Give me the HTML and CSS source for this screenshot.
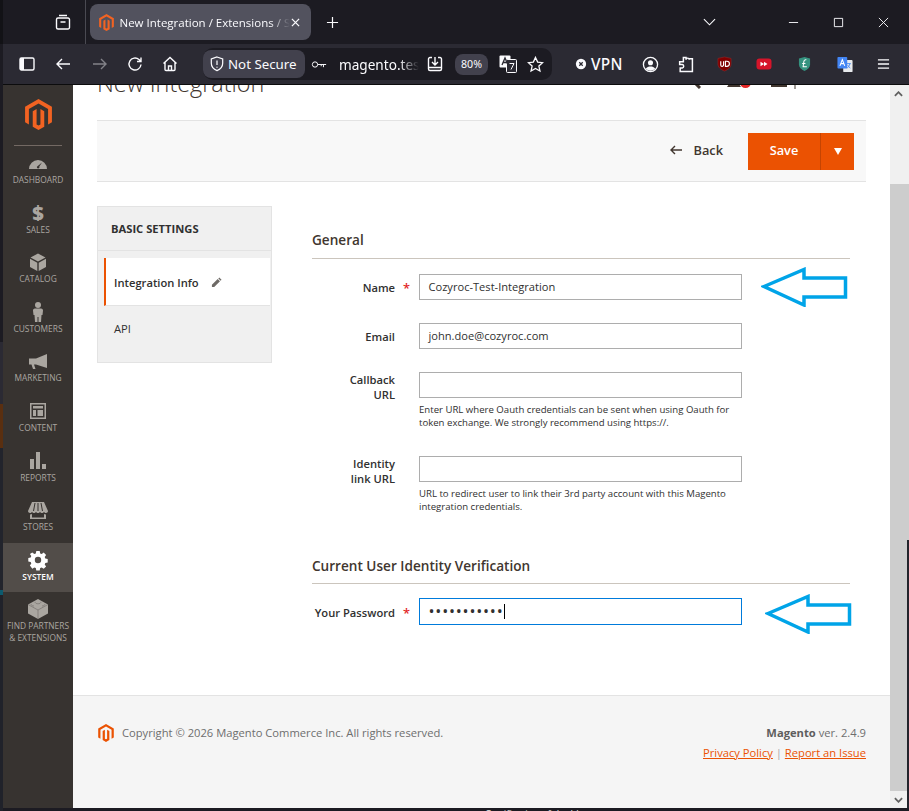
FILE: index.html
```html
<!DOCTYPE html>
<html lang="en">
<head>
<meta charset="utf-8">
<title>New Integration / Extensions / System</title>
<link rel="stylesheet" href="styles.css">
</head>
<body>
<div class="edge"></div>
<div class="window">
  <div class="tabbar">
    <div class="tabbar-left">
      <svg class="ico tabs-ico" viewBox="0 0 18 18"><path d="M5 2.5h8M2.5 6.5a1.5 1.5 0 0 1 1.5-1.5h10a1.5 1.5 0 0 1 1.5 1.5v8a1.5 1.5 0 0 1-1.5 1.5h-10a1.5 1.5 0 0 1-1.5-1.5zM6.5 9h5"/></svg>
    </div>
    <div class="tab">
      <svg class="favicon" viewBox="1.6 0 20.8 24"><path d="M12 0l10.39 6v12l-2.97 1.71V7.71L12 3.43 4.57 7.71v12L1.61 18V6zM12 24l-4.45-2.57v-12l2.97-1.72v12L12 20.43l1.49-.72v-12l2.97 1.72v12z"/></svg>
      <span class="tab-title">New Integration / Extensions / System</span>
      <svg class="ico tab-close" viewBox="0 0 10 10"><path d="M1 1l8 8M9 1l-8 8"/></svg>
    </div>
    <svg class="ico newtab" viewBox="0 0 14 14"><path d="M7 1v12M1 7h12"/></svg>
    <div class="spacer"></div>
    <svg class="ico chevron" viewBox="0 0 14 8"><path d="M1 1l6 6 6-6"/></svg>
    <div class="winctl">
      <svg class="ico" viewBox="0 0 12 12"><path d="M1 6h10"/></svg>
      <svg class="ico" viewBox="0 0 12 12"><path d="M1.5 1.5h9v9h-9z"/></svg>
      <svg class="ico" viewBox="0 0 12 12"><path d="M1 1l10 10M11 1L1 11"/></svg>
    </div>
  </div>

  <div class="toolbar">
    <svg class="ico tb t-side" viewBox="0 0 16 14"><path class="fillw" d="M1 2.5a1.5 1.5 0 0 1 1.5-1.5H5v12H2.5A1.5 1.5 0 0 1 1 11.500z"/><path d="M1 2.500a1.500 1.500 0 0 1 1.500-1.500h11a1.500 1.500 0 0 1 1.500 1.500v9a1.500 1.500 0 0 1-1.500 1.500h-11a1.500 1.500 0 0 1-1.500-1.500z"/></svg>
    <svg class="ico tb t-back" viewBox="0 0 16 14"><path d="M15 7H2M7 2L2 7l5 5"/></svg>
    <svg class="ico tb t-fwd" viewBox="0 0 16 14"><path d="M1 7h13M9 2l5 5-5 5"/></svg>
    <svg class="ico tb t-reload" viewBox="0 0 16 16"><path d="M14 8.500A6 6 0 1 1 12 3.500L14 5.500M14 1.500v4h-4"/></svg>
    <svg class="ico tb t-home" viewBox="0 0 16 16"><path d="M1.500 7.500L8 1.500l6.500 6M3 6.500v7a1 1 0 0 0 1 1h8a1 1 0 0 0 1-1v-7M6.500 14.500v-4.500h3v4.500"/></svg>
    <div class="urlbar">
      <div class="secure">
        <svg class="ico shield" viewBox="0 0 16 18"><path d="M8 1l6.500 2.200v5c0 4-2.800 6.800-6.500 8.300-3.700-1.500-6.500-4.300-6.500-8.300v-5z"/><path d="M8 5v5M8 12v1.400"/></svg>
        <span>Not Secure</span>
      </div>
      <svg class="ico key" viewBox="0 0 18 10"><circle cx="4.500" cy="5" r="3"/><path d="M7.500 5H17M14 5v3M11.500 5v2"/></svg>
      <span class="url">magento.test</span>
      <svg class="ico u-dl" viewBox="0 0 16 16"><path d="M5 1.500H3A1.500 1.500 0 0 0 1.500 3v10A1.500 1.500 0 0 0 3 14.500h10a1.500 1.500 0 0 0 1.500-1.500V3A1.500 1.500 0 0 0 13 1.500h-2M8 1v7.500M5 6l3 3 3-3M1.500 11.500h13"/></svg>
      <span class="zoomlevel">80%</span>
      <svg class="u-tr" viewBox="0 0 18 18"><rect x="0.500" y="0.500" width="11" height="12" rx="1" fill="#fbfbfe"/><rect x="7.500" y="4.500" width="10" height="13" rx="1" fill="#2b2a33" stroke="#fbfbfe"/><path d="M3 10l3-7 3 7M4.200 7.500h3.600" fill="none" stroke="#2b2a33" stroke-width="1.300"/><path d="M10.500 8.500h4.500l-3 6" fill="none" stroke="#fbfbfe"/></svg>
      <svg class="ico u-star" viewBox="0 0 18 18"><path d="M9 1.500l2.300 5 5.200.6-3.900 3.500 1.100 5.300L9 13.200l-4.700 2.700 1.100-5.300L1.500 7.100l5.200-.6z"/></svg>
    </div>
    <div class="vpn">
      <svg viewBox="0 0 14 14"><circle cx="7" cy="7" r="6" fill="#fbfbfe"/><path d="M5 5l4 4M9 5l-4 4" stroke="#2b2a33" stroke-width="1.500"/></svg>
      <span>VPN</span>
    </div>
    <svg class="ico ext e-acct" viewBox="0 0 18 18"><circle cx="9" cy="9" r="7.500"/><circle class="fillw" cx="9" cy="7.200" r="2.700"/><path class="fillw" d="M4 13.500c1-2 3-2.500 5-2.500s4 .5 5 2.500c-1 1.200-3 2-5 2s-4-.8-5-2z"/></svg>
    <svg class="ico ext e-puzzle" viewBox="0 0 16 16"><path d="M6 1.500h2.500v2a1.500 1.500 0 0 1 3 0v-1h3v12H3v-3.200h2a1.700 1.700 0 0 0 0-3.300H2.500V5.500H6z"/></svg>
    <svg class="ext e-ub" viewBox="0 0 16 16"><path d="M8 .5l7 1.500v6c0 3.500-3 6-7 7.500-4-1.500-7-4-7-7.500V2z" fill="#800000" stroke="#a52a2a" stroke-width=".5"/><path d="M4 5v4a1.500 1.500 0 0 0 3 0V5M9 5v5.500h1.500a2.700 2.700 0 0 0 0-5.500z" fill="none" stroke="#fff" stroke-width="1.200"/></svg>
    <svg class="ext e-ff" viewBox="0 0 16 12"><rect x="0.500" y="0.500" width="15" height="11" rx="3" fill="#d6142a"/><path d="M4.500 3.800L8 6 4.500 8.200zM8 3.800L11.500 6 8 8.200z" fill="#fff"/></svg>
    <svg class="ext e-ld" viewBox="0 0 14 16"><path d="M7 .5l6 1.500v6.500c0 3-2.500 5.500-6 7-3.500-1.500-6-4-6-7V2z" fill="#35927f"/><path d="M9 3.500c-1.500-.5-2.500.5-2.700 2L5.500 11h4M4.500 7.500h3.500" fill="none" stroke="#fff" stroke-width="1.100"/></svg>
    <svg class="ext e-gt" viewBox="0 0 18 18"><rect x="7" y="4" width="10.500" height="13.500" rx="1" fill="#e8eaed"/><rect x="0.500" y="0.500" width="11" height="13" rx="1" fill="#4285f4"/><path d="M3.300 10.500l2.700-7 2.700 7M4.300 8h3.400" fill="none" stroke="#fff" stroke-width="1.200"/><path d="M11 8h4.500M14.500 8c-.5 3-2 4.500-3.500 5M12 9.500c.5 1.500 1.500 2.500 3 3.500" fill="none" stroke="#4285f4"/></svg>
    <svg class="ico ext e-menu" viewBox="0 0 14 12"><path d="M1 1.500h12M1 6h12M1 10.500h12"/></svg>
  </div>
  <div class="chrome-line"></div>

  <div class="viewport">
    <nav class="menu">
      <div class="menu-logo">
        <svg viewBox="1.6 0 20.8 24"><path d="M12 0l10.390 6v12l-2.970 1.710V7.710L12 3.430 4.570 7.710v12L1.610 18V6zM12 24l-4.450-2.570v-12l2.970-1.720v12L12 20.430l1.490-.72v-12l2.970 1.720v12z"/></svg>
      </div>
      <a class="menu-item"><span class="menu-icon"><svg class="i-dash" viewBox="0 0 18 12"><path d="M0 12A9 9 0 0 1 18 12zM2.600 9.500v-.6M15.400 9.500v-.6M9 4.500v1M5 5.700l.6.700M13 5.400l-2.700 4.100a1.300 1.300 0 1 1-1.500-.6z" fill-rule="evenodd"/></svg></span><span class="menu-label">Dashboard</span></a>
      <a class="menu-item"><span class="menu-icon menu-dollar">$</span><span class="menu-label">Sales</span></a>
      <a class="menu-item"><span class="menu-icon"><svg class="i-cat" viewBox="0 0 16 18"><path d="M8 .5l7.500 4L8 8.500.5 4.500zM0 5.800l7.300 3.900V18L0 14zM16 5.800l-7.300 3.900V18l7.300-4z"/></svg></span><span class="menu-label">Catalog</span></a>
      <a class="menu-item"><span class="menu-icon"><svg class="i-cust" viewBox="0 0 10 20"><circle cx="5" cy="3" r="3"/><path d="M2 6.500h6c1.500 0 2 1 2 2l-.5 4.500H8.500L8 20H5.500v-5h-1v5H2l-.5-7H.5L0 8.500c0-1 .5-2 2-2z"/></svg></span><span class="menu-label">Customers</span></a>
      <a class="menu-item"><span class="menu-icon"><svg class="i-mkt" viewBox="0 0 18 15"><path d="M18 0v14L7 10.500H5l1.500 4.500H4L2.500 10.500H0v-6h7z"/></svg></span><span class="menu-label">Marketing</span></a>
      <a class="menu-item"><span class="menu-icon"><svg class="i-cont" viewBox="0 0 16 16"><path fill-rule="evenodd" d="M0 0h16v16H0zM1.500 1.500v13h13v-13zM3 3h10v2.500H3zM3 7h3v6H3zM7.500 7H13v6H7.500z"/></svg></span><span class="menu-label">Content</span></a>
      <a class="menu-item"><span class="menu-icon"><svg class="i-rep" viewBox="0 0 16 17"><path d="M0 7h4v10H0zM6 0h4v17H6zM12 12h4v5h-4z"/></svg></span><span class="menu-label">Reports</span></a>
      <a class="menu-item"><span class="menu-icon"><svg class="i-sto" viewBox="0 0 20 17"><path d="M4 0h12l4 9c0 1.300-1 2-2 2s-1.500-.5-2-1c-.5.500-1 1-2 1s-1.500-.5-2-1c-.5.500-1 1-2 1s-1.500-.5-2-1c-.5.500-1 1-2 1s-1.500-.5-2-1c-.5.500-1 1-2 1s-2-.7-2-2zM2 12.500c1 0 1.500-.2 2-.5v3.500h12V12c.5.300 1 .5 2 .5V17H2z"/><path class="cut" d="M7 1L5.500 9M10 1v8M13 1l1.500 8"/></svg></span><span class="menu-label">Stores</span></a>
      <a class="menu-item is-active"><span class="menu-icon"><svg class="i-sys" viewBox="0 0 18 18"><path fill-rule="evenodd" d="M7.300 0h3.400l.5 2.400 1.500.6 2-1.400 2.400 2.400-1.400 2 .6 1.500 2.400.5v3.400l-2.400.5-.6 1.500 1.400 2-2.400 2.400-2-1.400-1.500.6-.5 2.400H7.300l-.5-2.400-1.500-.6-2 1.400L.9 14.400l1.400-2-.6-1.500L-.7 10.400V7l2.400-.5.6-1.500-1.400-2L3.300 1.600l2 1.400 1.500-.6zM9 5.800a3.200 3.200 0 1 0 0 6.400 3.200 3.200 0 0 0 0-6.400z"/></svg></span><span class="menu-label">System</span></a>
      <a class="menu-item"><span class="menu-icon"><svg class="i-lego" viewBox="0 0 20 20"><path d="M10 0l10 5.500v9L10 20 0 14.500v-9z"/><path class="cut2" d="M0 5.500L10 11l10-5.500M10 11v9M7 2.800c0 1.200 1.300 2 3 2s3-.8 3-2M3 5c0 1.200 1.300 2 3 2M14 7c1.700 0 3-.8 3-2"/></svg></span><span class="menu-label">Find Partners &amp; Extensions</span></a>
    </nav>

    <div class="page">
      <div class="titlebar">
        <h1 class="page-title">New Integration</h1>
        <div class="header-tools">
          <svg class="h-search" viewBox="0 0 16 16"><circle cx="6" cy="6" r="5" fill="none" stroke="#41362f" stroke-width="2"/><path d="M10 10l5 5" stroke="#41362f" stroke-width="3"/></svg>
          <span class="h-bell"><svg viewBox="0 0 16 16"><path d="M8 0c3 0 5 2 5 6v3l2 3H1l2-3V6c0-4 2-6 5-6z" fill="#41362f"/></svg><i class="h-badge"></i></span>
          <svg class="h-user" viewBox="0 0 30 16"><path d="M4 0h16v9H4z" fill="#41362f"/><path d="M28 6v5" stroke="#41362f"/></svg>
        </div>
      </div>

      <div class="actions">
        <a class="back"><svg viewBox="0 0 12 10"><path d="M12 5H1.500M5 1L1 5l4 4"/></svg><span>Back</span></a>
        <div class="save-split">
          <span class="save">Save</span>
          <span class="save-toggle"><i class="caret-down"></i></span>
        </div>
      </div>

      <div class="main">
        <aside class="side">
          <div class="side-title">Basic Settings</div>
          <div class="side-links">
            <div class="side-item is-current"><span>Integration Info</span>
              <svg viewBox="0 0 12 12"><path d="M9 .5l2.500 2.500-1 1L8 1.500zM7.300 2.200l2.500 2.500L3.500 11H1v-2.500z"/></svg>
            </div>
            <div class="side-item side-item-plain">API</div>
          </div>
        </aside>

        <form class="form">
          <h2 class="section section-first">General</h2>
          <div class="field">
            <div class="label">Name</div><div class="req">*</div>
            <div class="control"><div class="input">Cozyroc-Test-Integration</div></div>
          </div>
          <div class="field">
            <div class="label">Email</div><div class="req"></div>
            <div class="control"><div class="input">john.doe@cozyroc.com</div></div>
          </div>
          <div class="field field-note">
            <div class="label label-two">Callback<br>URL</div><div class="req"></div>
            <div class="control"><div class="input"></div>
              <div class="note">Enter URL where Oauth credentials can be sent when using Oauth for token exchange. We strongly recommend using https://.</div></div>
          </div>
          <div class="field field-note">
            <div class="label label-two">Identity<br>link URL</div><div class="req"></div>
            <div class="control"><div class="input"></div>
              <div class="note">URL to redirect user to link their 3rd party account with this Magento integration credentials.</div></div>
          </div>
          <h2 class="section section-second">Current User Identity Verification</h2>
          <div class="field">
            <div class="label label-pw">Your Password</div><div class="req req-pw">*</div>
            <div class="control"><div class="input input-focus"><span class="dots">•••••••••••</span><i class="cursor"></i></div></div>
          </div>
          <svg class="arrow arrow-1" viewBox="0 0 88 40"><path d="M3 19.500L43 2.500v8.500h41.500v19H43v8z"/></svg>
          <svg class="arrow arrow-2" viewBox="0 0 88 40"><path d="M3 19.500L43 2.500v8.500h41.500v19H43v8z"/></svg>
        </form>
      </div>

      <footer class="footer">
        <div class="foot-left">
          <svg viewBox="1.6 0 20.8 24"><path d="M12 0l10.390 6v12l-2.970 1.710V7.710L12 3.430 4.570 7.710v12L1.610 18V6zM12 24l-4.450-2.570v-12l2.970-1.720v12L12 20.430l1.490-.72v-12l2.970 1.720v12z"/></svg>
          <span class="copy">Copyright © 2026 Magento Commerce Inc. All rights reserved.</span>
        </div>
        <div class="foot-right">
          <div><b>Magento</b> ver. 2.4.9</div>
          <div class="foot-links"><a>Privacy Policy</a> <span class="pipe">|</span> <a>Report an Issue</a></div>
        </div>
      </footer>
    </div>

    <div class="scrollbar">
      <div class="sb-btn"><svg viewBox="0 0 10 6"><path d="M1 5l4-4 4 4"/></svg></div>
      <div class="sb-gap"></div>
      <div class="sb-thumb"></div>
      <div class="sb-btn sb-btn-down"><svg viewBox="0 0 10 6"><path d="M1 1l4 4 4-4"/></svg></div>
    </div>
    <div class="right-edge"></div>
  </div>
  <div class="under"><span>Certification of the blog</span></div>
</div>
</body>
</html>
```

FILE: styles.css
```css
* { box-sizing: border-box; }
html, body { margin: 0; padding: 0; height: 100%; }
body {
  display: flex;
  width: 909px;
  height: 811px;
  overflow: hidden;
  background: #1c1b22;
  font-family: "Open Sans", "Noto Sans", sans-serif;
}
.edge {
  width: 3px;
  flex: none;
  background: linear-gradient(#121216 0 44px, #1c1b22 44px 342px, #2b2a33 342px 404px, #5a2f10 404px 448px, #22242c 448px 590px, #0c5a6e 590px 595px, #20222a 595px 811px);
}
.window { flex: 1; min-width: 0; display: flex; flex-direction: column; }

.ico { fill: none; stroke: #fbfbfe; stroke-width: 1.4; flex: none; display: block; }
.fillw { fill: #fbfbfe; stroke: none; }

/* tab strip */
.tabbar { height: 44px; flex: none; background: #1c1b22; display: flex; align-items: center; color: #fbfbfe; }
.tabbar-left { width: 83px; height: 44px; border-right: 1px solid #4a4a52; display: flex; align-items: center; justify-content: flex-end; padding-right: 13px; flex: none; }
.tabs-ico { width: 18px; height: 18px; }
.tab { margin-left: 4px; width: 221px; height: 36px; background: #52525e; border-radius: 8px; display: flex; align-items: center; padding: 0 9px; flex: none; }
.favicon { width: 15px; height: 17px; fill: #f26322; flex: none; }
.tab-title { margin-left: 5.500px; width: 170px; font-size: 11.500px; white-space: nowrap; overflow: hidden; -webkit-mask-image: linear-gradient(90deg, #000 150px, transparent 170px); mask-image: linear-gradient(90deg, #000 150px, transparent 170px); }
.tab-close { width: 9px; height: 9px; margin-left: 1px; }
.newtab { width: 13px; height: 13px; margin-left: 15px; stroke-width: 1.3; }
.spacer { flex: 1; }
.chevron { width: 13px; height: 8px; margin-right: 72px; stroke-width: 1.2; }
.winctl { display: flex; align-items: center; gap: 34px; padding-right: 20px; }
.winctl .ico { width: 11px; height: 11px; stroke-width: 1; }

/* toolbar */
.toolbar { height: 40px; flex: none; background: #2b2a33; display: flex; align-items: center; color: #fbfbfe; }
.chrome-line { height: 1px; flex: none; background: #0c0c0d; }
.tb { width: 16px; height: 16px; }
.t-side { margin-left: 16px; }
.t-back { margin-left: 20px; }
.t-fwd { margin-left: 21px; opacity: .42; }
.t-reload { margin-left: 19px; }
.t-home { margin-left: 19px; }
.urlbar { margin-left: 25px; width: 349px; height: 32px; background: #1c1b22; border-radius: 10px; display: flex; align-items: center; flex: none; }
.secure { width: 102px; height: 28px; margin-left: 0; background: #42414d; border-radius: 8px; display: flex; align-items: center; padding-left: 7px; font-family: "Noto Sans", sans-serif; font-size: 13.300px; flex: none; }
.shield { width: 14px; height: 16px; margin-right: 4px; }
.key { width: 16px; height: 9px; margin-left: 6px; stroke-width: 1.1; }
.url { margin-left: 12px; width: 80px; font-family: "Noto Sans", sans-serif; font-size: 13.600px; white-space: nowrap; overflow: hidden; flex: none; -webkit-mask-image: linear-gradient(90deg, #000 60px, transparent 80px); mask-image: linear-gradient(90deg, #000 60px, transparent 80px); }
.u-dl { width: 16px; height: 16px; margin-left: 8px; }
.zoomlevel { margin-left: 12px; width: 33px; height: 21px; background: #42414d; border-radius: 8px; font-family: "Noto Sans", sans-serif; font-size: 10.600px; display: flex; align-items: center; justify-content: center; flex: none; }
.u-tr { width: 18px; height: 18px; margin-left: 11px; flex: none; }
.u-star { width: 17px; height: 17px; margin-left: 10px; }
.vpn { margin-left: 23px; display: flex; align-items: center; font-family: "Noto Sans", sans-serif; font-size: 15.400px; font-weight: 500; flex: none; letter-spacing: .3px; }
.vpn svg { width: 12px; height: 12px; margin-right: 4px; }
.ext { flex: none; width: 17px; height: 17px; display: block; }
.e-acct { margin-left: 19px; }
.e-puzzle { margin-left: 18px; }
.e-ub { margin-left: 23px; width: 15px; height: 16px; }
.e-ff { margin-left: 24px; width: 16px; height: 12px; }
.e-ld { margin-left: 26px; width: 13px; height: 16px; }
.e-gt { margin-left: 26px; width: 16px; height: 17px; }
.e-menu { margin-left: 24px; width: 13px; height: 12px; }

/* viewport */
.viewport { flex: 1; min-height: 0; display: flex; background: #fff; }
.menu { width: 70px; flex: none; background: #373330; display: flex; flex-direction: column; }
.menu-logo { height: 61px; margin: 0 11px; border-bottom: 1px solid #736963; display: flex; justify-content: center; padding-top: 14px; }
.menu-logo svg { width: 27px; height: 31px; fill: #f26322; }
.menu-item { height: 49.600px; flex: none; padding-top: 7px; display: flex; flex-direction: column; align-items: center; color: #aaa6a0; }
.menu-icon { height: 21px; display: flex; align-items: center; justify-content: center; flex: none; padding-bottom: 1px; }
.menu-icon svg { fill: currentColor; display: block; flex: none; }
.menu-dollar { font-size: 20px; font-weight: 800; line-height: 18px; height: 20px; margin-bottom: 1px; padding-bottom: 0; }
.menu-label { font-size: 8.400px; line-height: 11.200px; text-transform: uppercase; text-align: center; }
.menu-item.is-active { background: #524d49; color: #fff; }
.menu-item.is-active .menu-label { font-weight: 600; }
.i-dash { width: 18px; height: 12px; }
.i-cat { width: 16px; height: 18px; }
.i-cust { width: 10px; height: 20px; }
.i-mkt { width: 18px; height: 15px; }
.i-cont { width: 16px; height: 16px; }
.i-rep { width: 16px; height: 17px; }
.i-sto { width: 20px; height: 17px; }
.i-sys { width: 18px; height: 18px; overflow: visible; }
.i-lego { width: 20px; height: 20px; }
.cut { fill: none; stroke: #373330; stroke-width: 1; }
.cut2 { fill: none; stroke: #6f6a66; stroke-width: .6; }

.page { flex: 1; min-width: 0; display: flex; flex-direction: column; overflow: hidden; color: #303030; }
.titlebar { height: 35px; flex: none; padding: 0 24px; display: flex; justify-content: space-between; }
.page-title { margin: -17px 0 0; font-size: 23.400px; line-height: 30px; font-weight: 300; color: #41362f; }
.header-tools { display: flex; align-items: flex-start; margin-top: -12px; }
.h-search { width: 16px; height: 16px; margin-right: 25px; }
.h-bell { width: 16px; height: 16px; position: relative; display: block; margin-right: 25px; margin-top: 2px; }
.h-bell svg { width: 16px; height: 16px; display: block; }
.h-badge { position: absolute; left: 14px; top: 2px; width: 11px; height: 11px; border-radius: 50%; background: #e22626; }
.h-user { width: 30px; height: 16px; margin-right: 69px; margin-top: 5px; }

.actions { margin: 0 24px; height: 62px; flex: none; background: #f8f8f8; border-top: 1px solid #e3e3e3; border-bottom: 1px solid #e3e3e3; display: flex; align-items: center; justify-content: flex-end; padding-right: 12px; }
.back { display: flex; align-items: center; color: #41362f; font-size: 12.800px; font-weight: 600; margin-right: 25px; padding-bottom: 2px; }
.back svg { width: 12px; height: 10px; fill: none; stroke: #41362f; stroke-width: 1.4; margin-right: 11px; }
.save-split { display: flex; height: 37px; background: #eb5202; color: #fff; font-size: 12.800px; font-weight: 600; }
.save { width: 73px; border-right: 1px solid #c54402; display: flex; align-items: center; justify-content: center; padding-bottom: 2px; }
.save-toggle { width: 33px; display: flex; align-items: center; justify-content: center; }
.caret-down { width: 0; height: 0; border-left: 4.500px solid transparent; border-right: 4.500px solid transparent; border-top: 7px solid #fff; }

.main { flex: 1; min-height: 0; padding: 24px 24px 0; display: grid; grid-template-columns: 175px 538px; column-gap: 40px; align-items: start; }
.side { height: 157px; background: #f0f0f0; border: 1px solid #e3e3e3; }
.side-title { height: 44px; padding-left: 13px; display: flex; align-items: center; font-size: 11.200px; font-weight: 700; text-transform: uppercase; color: #303030; border-bottom: 1px solid #e3e3e3; }
.side-links { padding: 7px 1px 0 6px; }
.side-item { height: 48px; padding-left: 10px; display: flex; align-items: center; font-size: 11.200px; font-weight: 400; color: #303030; }
.side-item-plain { padding-bottom: 3px; }
.side-item.is-current { background: #fff; border-left: 2px solid #eb5202; border-bottom: 1px solid #e3e3e3; padding-left: 8px; padding-top: 1px; font-weight: 600; }
.side-item svg { width: 11px; height: 11px; margin-left: 12px; fill: #6e6a66; }

.form { position: relative; padding-top: 24px; }
.section { margin: 0; font-size: 13.600px; line-height: 20px; font-weight: 600; color: #41362f; border-bottom: 1px solid #cbc5bd; }
.section-first { padding-bottom: 8px; margin-bottom: 15px; }
.section-second { padding-bottom: 7px; margin-top: 43.400px; margin-bottom: 14px; }
.field { display: grid; grid-template-columns: 83px 24px 323px; margin-bottom: 23.400px; }
.field-note { margin-bottom: 27.400px; }
.section-second + .field { margin-bottom: 0; }
.label { font-size: 11.200px; font-weight: 600; line-height: 15px; text-align: right; padding-top: 6px; color: #303030; }
.label-two { padding-top: 0; }
.label-pw { padding-top: 7px; }
.req { color: #e22626; font-size: 12.800px; font-weight: 600; line-height: 15px; padding: 7px 0 0 8px; }
.req-pw { padding-top: 8px; }
.input { height: 25.600px; border: 1px solid #adadad; background: #fff; padding: 0 8.500px; font-size: 11.100px; color: #303030; display: flex; align-items: center; white-space: nowrap; }
.input-focus { height: 27px; border-color: #007bdb; }
.dots { letter-spacing: .8px; font-size: 16px; line-height: 20px; }
.cursor { width: 1px; height: 15px; background: #000; margin-left: 1px; }
.note { margin-top: 5px; font-size: 9.600px; line-height: 13px; color: #303030; }
.arrow { position: absolute; width: 88px; height: 40px; fill: none; stroke: #00a4e8; stroke-width: 3.500; }
.arrow-1 { left: 449px; top: 61px; }
.arrow-2 { left: 453px; top: 388px; }

.footer { height: 113px; flex: none; background: #f5f5f5; border-top: 1px solid #e3e3e3; padding: 28px 24px 0 25px; display: flex; justify-content: space-between; align-items: flex-start; font-size: 11.200px; color: #6e6e6e; }
.foot-left { display: flex; align-items: center; height: 18px; }
.foot-left svg { width: 16px; height: 18px; fill: #eb5202; margin-right: 8px; flex: none; }
.copy { padding-bottom: 2px; }
.foot-right { text-align: right; line-height: 20px; margin-top: -1px; }
.foot-right b { font-weight: 700; color: #5e5e5e; }
.foot-links a { color: #eb5202; text-decoration: underline; }
.pipe { color: #aaa; }

.scrollbar { width: 17px; flex: none; background: #f0f0f0; display: flex; flex-direction: column; }
.sb-btn { height: 17px; flex: none; display: flex; align-items: center; justify-content: center; }
.sb-btn svg { width: 9px; height: 6px; fill: none; stroke: #606060; stroke-width: 2; }
.sb-gap { height: 82px; flex: none; }
.sb-thumb { flex: 1; background: #cdcdcd; }
.right-edge { width: 2px; flex: none; background: linear-gradient(#f0f0f0 0 99px, #cdcdcd 99px 455px, #23242c 455px 100%); }
.under { height: 3px; flex: none; background: #1c1b22; overflow: hidden; padding-left: 482px; color: #e8e8e8; font-size: 9.600px; line-height: 12px; white-space: nowrap; }
```
